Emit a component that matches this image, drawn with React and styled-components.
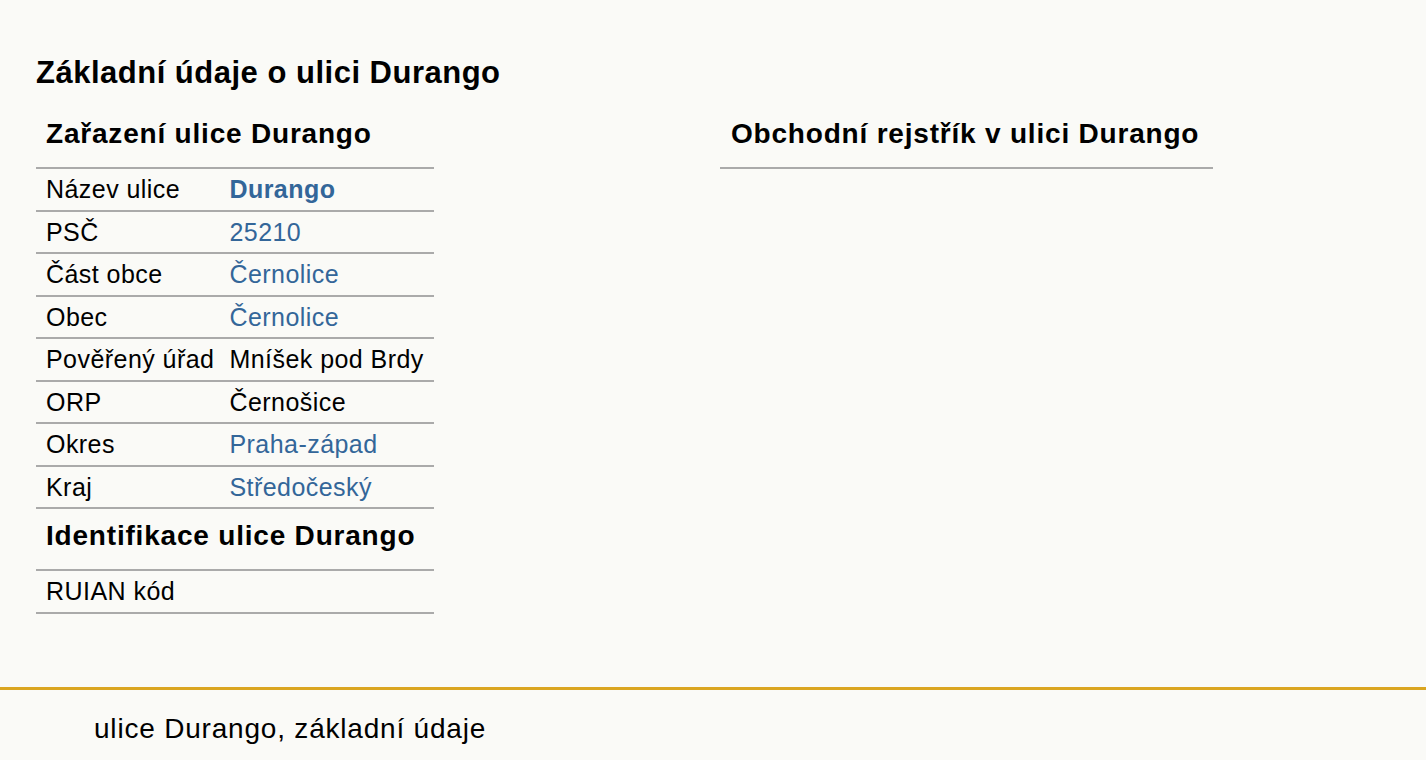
import styled, { createGlobalStyle } from 'styled-components';

const GlobalStyle = createGlobalStyle`
  html, body {
    margin: 0;
    padding: 0;
    background: #fafaf7;
    font-family: 'Liberation Sans', Arial, sans-serif;
    color: #000;
  }
`;

const Page = styled.div`
  min-height: 760px;
  display: flex;
  flex-direction: column;
`;

const Main = styled.main`
  padding: 52px 36px 0;
  flex: 1;
`;

const Title = styled.h1`
  margin: 0;
  font-size: 31px;
  line-height: 42px;
  letter-spacing: 0.5px;
  font-weight: bold;
`;

const Columns = styled.div`
  display: flex;
  align-items: flex-start;
  margin-top: 13px;
`;

const LeftCol = styled.div`
  width: 684px;
`;

const RightCol = styled.div`
  width: 493px;
`;

const InfoTable = styled.table`
  border-collapse: collapse;
  font-size: 25px;
  letter-spacing: 0.45px;
`;

const HeadCell = styled.th`
  text-align: left;
  font-size: 28px;
  letter-spacing: 0.8px;
  font-weight: bold;
  height: 53px;
  padding: 0 10px 7px;
  border-bottom: 2px solid #aaa;
  vertical-align: middle;
`;

const Cell = styled.td`
  height: 40.5px;
  line-height: 24px;
  padding: 0 5px 0 10px;
  border-bottom: 2px solid #aaa;
  white-space: nowrap;
  font-weight: ${(p) => (p.$strong ? 'bold' : 'normal')};

  &:last-child {
    padding-right: 10px;
  }

  a {
    color: #336699;
    text-decoration: none;
  }
`;

const SideHeading = styled.h2`
  margin: 0;
  height: 53px;
  display: flex;
  align-items: center;
  padding: 0 11px 7px;
  font-size: 28px;
  letter-spacing: 0.8px;
  font-weight: bold;
  border-bottom: 2px solid #aaa;
`;

const Footer = styled.footer`
  border-top: 3px solid #daa520;
  padding: 23px 94px 0;
  height: 73px;
  box-sizing: border-box;
  font-size: 28px;
  letter-spacing: 0.8px;
`;

const rows = [
  { label: 'Název ulice', value: 'Durango', link: true, strong: true },
  { label: 'PSČ', value: '25210', link: true },
  { label: 'Část obce', value: 'Černolice', link: true },
  { label: 'Obec', value: 'Černolice', link: true },
  { label: 'Pověřený úřad', value: 'Mníšek pod Brdy' },
  { label: 'ORP', value: 'Černošice' },
  { label: 'Okres', value: 'Praha-západ', link: true },
  { label: 'Kraj', value: 'Středočeský', link: true },
];

const App = () => {
  return (
    <Page>
      <GlobalStyle />
      <Main>
        <Title>Základní údaje o ulici Durango</Title>
        <Columns>
          <LeftCol>
            <InfoTable>
              <tbody>
                <tr>
                  <HeadCell colSpan={2}>Zařazení ulice Durango</HeadCell>
                </tr>
                {rows.map((r) => (
                  <tr key={r.label}>
                    <Cell>{r.label}</Cell>
                    <Cell $strong={r.strong}>
                      {r.link ? <a href="#">{r.value}</a> : r.value}
                    </Cell>
                  </tr>
                ))}
                <tr>
                  <HeadCell colSpan={2}>Identifikace ulice Durango</HeadCell>
                </tr>
                <tr>
                  <Cell>RUIAN kód</Cell>
                  <Cell></Cell>
                </tr>
              </tbody>
            </InfoTable>
          </LeftCol>
          <RightCol>
            <SideHeading>Obchodní rejstřík v ulici Durango</SideHeading>
          </RightCol>
        </Columns>
      </Main>
      <Footer>ulice Durango, základní údaje</Footer>
    </Page>
  );
};

export default App;
